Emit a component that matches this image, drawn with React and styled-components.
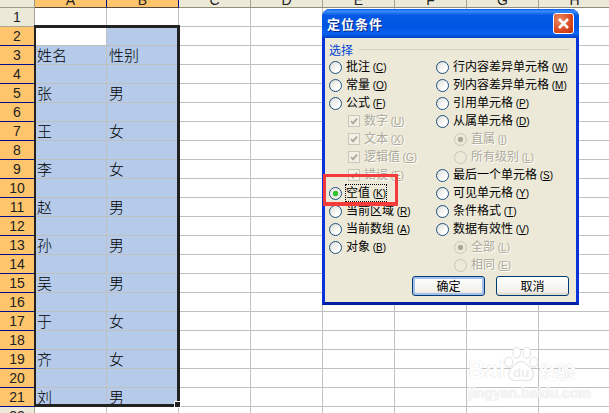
import styled, { createGlobalStyle } from "styled-components";

const columns = ["A", "B", "C", "D", "E", "F", "G", "H", "I"];
const names = {
  3: ["姓名", "性别"],
  5: ["张", "男"],
  7: ["王", "女"],
  9: ["李", "女"],
  11: ["赵", "男"],
  13: ["孙", "男"],
  15: ["吴", "男"],
  17: ["于", "女"],
  19: ["齐", "女"],
  21: ["刘", "男"],
};
const rows = Array.from({ length: 22 }, (_, i) => i + 1);

const leftOptions = [
  { type: "radio", text: "批注", key: "C" },
  { type: "radio", text: "常量", key: "O" },
  { type: "radio", text: "公式", key: "F" },
  { type: "check", text: "数字", key: "U" },
  { type: "check", text: "文本", key: "X" },
  { type: "check", text: "逻辑值", key: "G" },
  { type: "check", text: "错误", key: "E" },
  { type: "radio", text: "空值", key: "K", checked: true },
  { type: "radio", text: "当前区域", key: "R" },
  { type: "radio", text: "当前数组", key: "A" },
  { type: "radio", text: "对象", key: "B" },
];
const rightOptions = [
  { type: "radio", text: "行内容差异单元格", key: "W" },
  { type: "radio", text: "列内容差异单元格", key: "M" },
  { type: "radio", text: "引用单元格", key: "P" },
  { type: "radio", text: "从属单元格", key: "D" },
  { type: "sub", text: "直属", key: "I", dot: true },
  { type: "sub", text: "所有级别", key: "L" },
  { type: "radio", text: "最后一个单元格", key: "S" },
  { type: "radio", text: "可见单元格", key: "Y" },
  { type: "radio", text: "条件格式", key: "T" },
  { type: "radio", text: "数据有效性", key: "V" },
  { type: "sub", text: "全部", key: "L", dot: true },
  { type: "sub", text: "相同", key: "E" },
];

const Option = ({ item }) => {
  const disabled = item.type !== "radio";
  return (
    <OptionRow $indent={item.type === "check" ? 19 : item.type === "sub" ? 18 : 0}>
      {item.type === "check" ? (
        <CheckBox>
          <svg width="10" height="10" viewBox="0 0 10 10">
            <path d="M2 5l2 2.4L8 2.6" fill="none" stroke="#aca899" strokeWidth="1.8" />
          </svg>
        </CheckBox>
      ) : (
        <Radio $disabled={disabled} $checked={item.checked} $dot={item.dot} />
      )}
      <OptionLabel $disabled={disabled} $focus={item.checked}>
        {item.text} <Key>(<u>{item.key}</u>)</Key>
      </OptionLabel>
    </OptionRow>
  );
};

const App = () => {
  return (
    <Stage>
      <GlobalStyle />
      <HeaderRow>
        <Corner />
        {columns.map((c, i) => (
          <ColumnHead key={c} $active={i < 2}>{c}</ColumnHead>
        ))}
      </HeaderRow>
      {rows.map((r) => {
        const active = r >= 2 && r <= 21;
        return (
          <SheetRow key={r}>
            <RowHead $active={active}>{r}</RowHead>
            {columns.map((c, i) => (
              <Cell key={c} $selected={active && i < 2 && !(r === 2 && i === 0)}>
                {i < 2 && names[r] ? names[r][i] : ""}
              </Cell>
            ))}
          </SheetRow>
        );
      })}

      <Selection>
        <FillHandle />
      </Selection>

      <Watermark>
        <WatermarkTop>
          <WatermarkText>Bai</WatermarkText>
          <svg width="36" height="36" viewBox="0 0 50 50">
            <g fill="#fff" stroke="#e2e2e2" strokeWidth="1.4">
              <ellipse cx="8" cy="21" rx="5.5" ry="7" />
              <ellipse cx="19" cy="8" rx="5.5" ry="7.5" />
              <ellipse cx="33" cy="8" rx="5.5" ry="7.5" />
              <ellipse cx="43" cy="21" rx="5.5" ry="7" />
              <path d="M25 20c6 0 9 6 14 10 6 6 3 17-6 17-3 0-5-1-8-1s-5 1-8 1c-9 0-12-11-6-17 5-4 8-10 14-10z" />
            </g>
            <text x="25" y="41" textAnchor="middle" fontFamily="Liberation Sans, sans-serif" fontSize="19" fontWeight="700" fill="#ededed">du</text>
          </svg>
          <WatermarkCjk>经验</WatermarkCjk>
        </WatermarkTop>
        <WatermarkUrl>jingyan.baidu.com</WatermarkUrl>
      </Watermark>

      <Dialog>
        <TitleBar>
          <Title>定位条件</Title>
          <CloseButton>
            <svg width="13" height="13" viewBox="0 0 13 13">
              <path d="M2 2l9 9M11 2l-9 9" stroke="#fff" strokeWidth="2.6" />
            </svg>
          </CloseButton>
        </TitleBar>
        <DialogBody>
          <Legend>
            <span>选择</span>
            <LegendLine />
          </Legend>
          <OptionColumns>
            <OptionColumn>
              {leftOptions.map((item) => <Option key={item.text} item={item} />)}
            </OptionColumn>
            <OptionColumn>
              {rightOptions.map((item) => <Option key={item.text} item={item} />)}
            </OptionColumn>
          </OptionColumns>
          <ButtonRow>
            <DialogButton $primary>确定</DialogButton>
            <DialogButton>取消</DialogButton>
          </ButtonRow>
        </DialogBody>
        <Highlight />
      </Dialog>
    </Stage>
  );
};

export default App;

const GlobalStyle = createGlobalStyle`
  html, body {
    margin: 0;
    padding: 0;
    background: #fff;
  }
`;

const Stage = styled.div`
  position: relative;
  width: 609px;
  height: 413px;
  overflow: hidden;
  background: #fff;
  font-family: "Liberation Sans", "Noto Sans CJK SC", sans-serif;
`;

const HeaderRow = styled.div`
  display: flex;
  height: 8px;
`;

const Corner = styled.div`
  flex: 0 0 35px;
  box-sizing: border-box;
  background: #ece9d8;
  border-right: 1px solid #9d9a85;
  border-bottom: 1px solid #9d9a85;
`;

const ColumnHead = styled.div`
  flex: 0 0 72px;
  box-sizing: border-box;
  display: flex;
  justify-content: center;
  align-items: flex-end;
  overflow: hidden;
  font-size: 14px;
  line-height: 13px;
  color: #222;
  background: ${(p) => (p.$active ? "#ffc56c" : "#ece9d8")};
  border-right: 1px solid ${(p) => (p.$active ? "#000a8c" : "#a6a38e")};
  border-bottom: 1px solid ${(p) => (p.$active ? "#5b4a3a" : "#8f8c78")};
`;

const SheetRow = styled.div`
  display: flex;
  height: 19px;
`;

const RowHead = styled.div`
  flex: 0 0 35px;
  box-sizing: border-box;
  display: flex;
  justify-content: center;
  align-items: center;
  font-size: 14px;
  color: #222;
  background: ${(p) => (p.$active ? "#ffc56c" : "#ece9d8")};
  border-right: 1px solid ${(p) => (p.$active ? "#000a8c" : "#a6a38e")};
  border-bottom: 1px solid ${(p) => (p.$active ? "#000a8c" : "#a6a38e")};
`;

const Cell = styled.div`
  flex: 0 0 72px;
  box-sizing: border-box;
  padding-left: 2px;
  font-family: "Noto Sans CJK SC", sans-serif;
  font-size: 15px;
  font-weight: 300;
  line-height: 17px;
  color: #000;
  background: ${(p) => (p.$selected ? "#b5cbe9" : "#fff")};
  border-right: 1px solid #c0c0c0;
  border-bottom: 1px solid #c0c0c0;
`;

const Selection = styled.div`
  position: absolute;
  left: 34px;
  top: 25px;
  width: 146px;
  height: 382px;
  box-sizing: border-box;
  border: 3px solid #222;
  border-left-width: 2px;
  pointer-events: none;
`;

const FillHandle = styled.div`
  position: absolute;
  right: -4px;
  bottom: -4px;
  width: 5px;
  height: 5px;
  background: #222;
  border: 1px solid #fff;
`;

const Watermark = styled.div`
  position: absolute;
  left: 468px;
  top: 347px;
  display: flex;
  flex-direction: column;
  color: #fff;
`;

const WatermarkTop = styled.div`
  display: flex;
  align-items: flex-end;
  height: 36px;
`;

const WatermarkText = styled.span`
  font-size: 24px;
  font-weight: 700;
  line-height: 27px;
  text-shadow: 0 0 1px #c8c8c8;
  margin-right: -2px;
`;

const WatermarkCjk = styled.span`
  font-family: "Noto Sans CJK SC", sans-serif;
  font-size: 18px;
  font-weight: 700;
  line-height: 24px;
  text-shadow: 0 0 1px #c8c8c8;
`;

const WatermarkUrl = styled.span`
  margin-top: 2px;
  font-size: 14px;
  line-height: 16px;
  font-weight: 700;
  white-space: nowrap;
  color: #f6f6f6;
  text-shadow: 0 0 1px #d8d8d8;
`;

const Dialog = styled.div`
  position: absolute;
  left: 322px;
  top: 9px;
  width: 257px;
  height: 296px;
  box-sizing: border-box;
  display: flex;
  flex-direction: column;
  border: 3px solid #0831d9;
  border-top: 0;
  border-bottom-color: #001ea0;
  border-radius: 8px 8px 0 0;
  background: #ece9d8;
  color: #000;
`;

const TitleBar = styled.div`
  flex: 0 0 29px;
  margin: 0 -3px;
  padding: 0 5px;
  display: flex;
  align-items: center;
  justify-content: space-between;
  border-radius: 8px 8px 0 0;
  background: linear-gradient(180deg, #0a5be6 0%, #3a8cf8 8%, #0358e4 22%, #0055e3 60%, #0a62f0 85%, #0340c4 100%);
`;

const Title = styled.span`
  font-family: "Noto Sans CJK SC", sans-serif;
  font-size: 13px;
  font-weight: 700;
  letter-spacing: 1px;
  color: #fff;
  text-shadow: 1px 1px 0 #0a2a8c;
`;

const CloseButton = styled.div`
  width: 21px;
  height: 21px;
  box-sizing: border-box;
  display: flex;
  align-items: center;
  justify-content: center;
  border: 1px solid #fff;
  border-radius: 3px;
  background: radial-gradient(circle at 30% 30%, #ee8a64, #d9481f 60%, #b8320e);
`;

const DialogBody = styled.div`
  flex: 1;
  padding: 3px 7px 0 4px;
  display: flex;
  flex-direction: column;
  min-height: 0;
`;

const Legend = styled.div`
  height: 16px;
  margin-bottom: 1px;
  display: flex;
  align-items: center;
  gap: 6px;
  font-family: "Noto Sans CJK SC", sans-serif;
  font-size: 12px;
  color: #0046d5;
`;

const LegendLine = styled.div`
  flex: 1;
  height: 1px;
  background: #d0d0bf;
`;

const OptionColumns = styled.div`
  display: flex;
`;

const OptionColumn = styled.div`
  flex: 0 0 107px;
  display: flex;
  flex-direction: column;
`;

const OptionRow = styled.div`
  height: 18px;
  display: flex;
  align-items: center;
  white-space: nowrap;
  padding-left: ${(p) => p.$indent}px;
`;

const Radio = styled.span`
  flex: 0 0 13px;
  height: 13px;
  box-sizing: border-box;
  border-radius: 50%;
  margin-right: 4px;
  border: 1px solid ${(p) => (p.$disabled ? "#c9c7b8" : "#1c5180")};
  background: ${(p) =>
    p.$checked
      ? "radial-gradient(circle, #2fc52f 0 2.5px, #e6e6de 3px, #fff 100%)"
      : p.$dot
        ? "radial-gradient(circle, #aca899 0 2.5px, #ece9d8 3px)"
        : p.$disabled
          ? "#ece9d8"
          : "linear-gradient(135deg, #dcdcd4, #fff 70%)"};
`;

const CheckBox = styled.span`
  flex: 0 0 12px;
  height: 12px;
  box-sizing: border-box;
  display: flex;
  align-items: center;
  justify-content: center;
  margin-right: 4px;
  border: 1px solid #c9c7b8;
  background: #f2f0e4;
`;

const OptionLabel = styled.span`
  font-family: "Noto Sans CJK SC", sans-serif;
  font-size: 12px;
  line-height: 14px;
  color: ${(p) => (p.$disabled ? "#aca899" : "#000")};
  text-shadow: ${(p) => (p.$disabled ? "1px 1px 0 #fff" : "none")};
  outline: ${(p) => (p.$focus ? "1px dotted #000" : "none")};
`;

const Key = styled.span`
  font-family: "Liberation Sans", sans-serif;
  font-size: 10px;
`;

const ButtonRow = styled.div`
  margin-top: 2px;
  display: flex;
  justify-content: flex-end;
  gap: 11px;
`;

const DialogButton = styled.button`
  width: 73px;
  height: 20px;
  padding: 0;
  box-sizing: border-box;
  font-family: "Noto Sans CJK SC", sans-serif;
  font-size: 12px;
  line-height: 16px;
  color: #000;
  border: 1px solid #003c74;
  border-radius: 3px;
  background: linear-gradient(180deg, #fff, #f2f1ea 80%, #d8d5c8);
  box-shadow: ${(p) => (p.$primary ? "inset 0 0 0 2px #a5c0ec" : "none")};
`;

const Highlight = styled.div`
  position: absolute;
  left: -2px;
  top: 165px;
  width: 75px;
  height: 32px;
  box-sizing: border-box;
  border: 3px solid #f43b3b;
  border-bottom-width: 4px;
  pointer-events: none;
`;
